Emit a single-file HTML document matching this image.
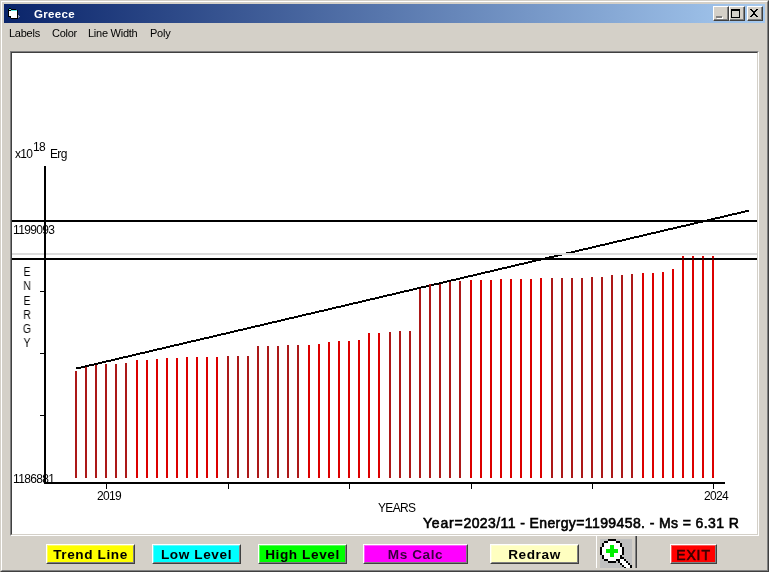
<!DOCTYPE html>
<html><head><meta charset="utf-8"><title>Greece</title>
<style>
html,body{margin:0;padding:0}
body{width:769px;height:572px;overflow:hidden;background:#d4d0c8;position:relative;font-family:"Liberation Sans",sans-serif;color:#000}
.a{position:absolute}
.t8,.menu,.ttext,.status,.btn{will-change:transform}
.win{left:0;top:0;width:769px;height:572px;box-sizing:border-box;background:#d4d0c8;
 border-top:1px solid #d4d0c8;border-left:1px solid #d4d0c8;border-right:1px solid #404040;border-bottom:1px solid #404040}
.win2{left:1px;top:1px;width:767px;height:570px;box-sizing:border-box;
 border-top:1px solid #fff;border-left:1px solid #fff;border-right:1px solid #808080;border-bottom:1px solid #808080}
.title{left:4px;top:4px;width:761px;height:19px;background:linear-gradient(to right,#0a246a 0%,#a6caf0 100%)}
.ttext{left:34px;top:7px;color:#fff;font-weight:bold;font-size:11.5px;line-height:14px;letter-spacing:0.35px;white-space:nowrap}
.cb{top:6px;width:16px;height:15px;box-sizing:border-box;background:#d4d0c8;border-top:1px solid #fff;border-left:1px solid #fff;border-right:1px solid #404040;border-bottom:1px solid #404040}
.cb i{position:absolute;left:0;top:0;width:13px;height:12px;border-right:1px solid #808080;border-bottom:1px solid #808080;display:block}
.menu{top:26px;font-size:11px;line-height:14px;white-space:nowrap;letter-spacing:-0.25px}
.panel{left:10px;top:51px;width:749px;height:485px;box-sizing:border-box;background:#fff;
 border-top:1px solid #808080;border-left:1px solid #808080;border-right:1px solid #fff;border-bottom:1px solid #fff}
.panel2{left:11px;top:52px;width:747px;height:483px;box-sizing:border-box;
 border-top:1px solid #404040;border-left:1px solid #404040;border-right:1px solid #d4d0c8;border-bottom:1px solid #d4d0c8}
.t8{font-size:12px;line-height:12px;letter-spacing:-0.65px;white-space:nowrap}
.btn{top:544px;height:20px;box-sizing:border-box;border-top:1px solid #fff;border-left:1px solid #fff;border-right:1px solid #404040;border-bottom:1px solid #404040;
 font-weight:bold;font-size:13.6px;line-height:16px;text-align:center;white-space:nowrap;letter-spacing:0.6px}
.btn b{display:block;padding-top:0.5px;box-sizing:border-box;width:100%;height:18px;border-right:1px solid #808080;border-bottom:1px solid #808080;border-top:1px solid rgba(255,255,255,.35);border-left:1px solid rgba(255,255,255,.35);font-weight:bold}
.status{left:423px;top:515px;font-size:14px;line-height:16px;white-space:nowrap;letter-spacing:0.4px;-webkit-text-stroke:0.6px #000}
</style></head><body>
<div class="a win"></div><div class="a win2"></div>
<div class="a title"></div>
<svg class="a" style="left:8px;top:8px" width="13" height="11" viewBox="0 0 13 11" shape-rendering="crispEdges">
<rect x="1" y="0" width="2" height="1" fill="#000"/><rect x="3" y="1" width="5" height="1" fill="#000"/>
<rect x="0" y="1" width="1" height="8" fill="#000"/><rect x="9" y="2" width="1" height="9" fill="#000"/>
<rect x="0" y="8" width="3" height="1" fill="#000"/><rect x="3" y="10" width="7" height="1" fill="#000"/><rect x="2" y="9" width="1" height="1" fill="#000"/>
<rect x="1" y="1" width="2" height="1" fill="#60e8e0"/><rect x="3" y="2" width="6" height="1" fill="#60e8e0"/>
<rect x="1" y="2" width="2" height="1" fill="#000"/><rect x="1" y="3" width="2" height="5" fill="#fff"/><rect x="3" y="3" width="6" height="7" fill="#fff"/>
<rect x="10" y="7" width="1" height="3" fill="#8a93ad"/><rect x="11" y="8" width="1" height="1" fill="#8a93ad"/>
</svg>
<div class="a ttext">Greece</div>
<div class="a cb" style="left:713px"><i></i><span class="a" style="left:3px;top:10px;width:6px;height:2px;background:#fff"></span><span class="a" style="left:2px;top:9px;width:6px;height:2px;background:#808080"></span></div>
<div class="a cb" style="left:729px"><i></i><span class="a" style="left:1px;top:2px;width:9px;height:9px;box-sizing:border-box;border:1px solid #000;border-top-width:2px"></span></div>
<div class="a cb" style="left:747px"><i></i><svg class="a" style="left:2px;top:2px" width="8" height="8" viewBox="0 0 8 8" shape-rendering="crispEdges"><path d="M0 0h2v1h-2zM6 0h2v1h-2zM1 1h2v1h-2zM5 1h2v1h-2zM2 2h4v1h-4zM3 3h2v2h-2zM2 5h4v1h-4zM1 6h2v1h-2zM5 6h2v1h-2zM0 7h2v1h-2zM6 7h2v1h-2z" fill="#000"/></svg></div>
<div class="a menu" style="left:9px">Labels</div>
<div class="a menu" style="left:52px">Color</div>
<div class="a menu" style="left:88px">Line Width</div>
<div class="a menu" style="left:150px">Poly</div>

<div class="a panel"></div><div class="a panel2"></div>
<svg class="a" style="left:12px;top:53px" width="745" height="481" viewBox="0 0 745 481" shape-rendering="crispEdges">
<path d="M64 314h5v2h-5zM69 313h4v2h-4zM73 312h4v2h-4zM77 311h5v2h-5zM82 310h4v2h-4zM86 309h4v2h-4zM90 308h4v2h-4zM94 307h5v2h-5zM99 306h4v2h-4zM103 305h4v2h-4zM107 304h4v2h-4zM111 303h5v2h-5zM116 302h4v2h-4zM120 301h4v2h-4zM124 300h4v2h-4zM128 299h5v2h-5zM133 298h4v2h-4zM137 297h4v2h-4zM141 296h4v2h-4zM145 295h5v2h-5zM150 294h4v2h-4zM154 293h4v2h-4zM158 292h4v2h-4zM162 291h5v2h-5zM167 290h4v2h-4zM171 289h4v2h-4zM175 288h4v2h-4zM179 287h5v2h-5zM184 286h4v2h-4zM188 285h4v2h-4zM192 284h5v2h-5zM197 283h4v2h-4zM201 282h4v2h-4zM205 281h4v2h-4zM209 280h5v2h-5zM214 279h4v2h-4zM218 278h4v2h-4zM222 277h4v2h-4zM226 276h5v2h-5zM231 275h4v2h-4zM235 274h4v2h-4zM239 273h4v2h-4zM243 272h5v2h-5zM248 271h4v2h-4zM252 270h4v2h-4zM256 269h4v2h-4zM260 268h5v2h-5zM265 267h4v2h-4zM269 266h4v2h-4zM273 265h4v2h-4zM277 264h5v2h-5zM282 263h4v2h-4zM286 262h4v2h-4zM290 261h4v2h-4zM294 260h5v2h-5zM299 259h4v2h-4zM303 258h4v2h-4zM307 257h5v2h-5zM312 256h4v2h-4zM316 255h4v2h-4zM320 254h4v2h-4zM324 253h5v2h-5zM329 252h4v2h-4zM333 251h4v2h-4zM337 250h4v2h-4zM341 249h5v2h-5zM346 248h4v2h-4zM350 247h4v2h-4zM354 246h4v2h-4zM358 245h5v2h-5zM363 244h4v2h-4zM367 243h4v2h-4zM371 242h4v2h-4zM375 241h5v2h-5zM380 240h4v2h-4zM384 239h4v2h-4zM388 238h4v2h-4zM392 237h5v2h-5zM397 236h4v2h-4zM401 235h4v2h-4zM405 234h4v2h-4zM409 233h5v2h-5zM414 232h4v2h-4zM418 231h4v2h-4zM422 230h5v2h-5zM427 229h4v2h-4zM431 228h4v2h-4zM435 227h4v2h-4zM439 226h5v2h-5zM444 225h4v2h-4zM448 224h4v2h-4zM452 223h4v2h-4zM456 222h5v2h-5zM461 221h4v2h-4zM465 220h4v2h-4zM469 219h4v2h-4zM473 218h5v2h-5zM478 217h4v2h-4zM482 216h4v2h-4zM486 215h4v2h-4zM490 214h5v2h-5zM495 213h4v2h-4zM499 212h4v2h-4zM503 211h4v2h-4zM507 210h5v2h-5zM512 209h4v2h-4zM516 208h4v2h-4zM520 207h4v2h-4zM524 206h5v2h-5zM529 205h4v2h-4zM533 204h4v2h-4zM537 203h5v2h-5zM542 202h4v2h-4zM546 201h4v2h-4zM550 200h4v2h-4zM554 199h5v2h-5zM559 198h4v2h-4zM563 197h4v2h-4zM567 196h4v2h-4zM571 195h5v2h-5zM576 194h4v2h-4zM580 193h4v2h-4zM584 192h4v2h-4zM588 191h5v2h-5zM593 190h4v2h-4zM597 189h4v2h-4zM601 188h4v2h-4zM605 187h5v2h-5zM610 186h4v2h-4zM614 185h4v2h-4zM618 184h4v2h-4zM622 183h5v2h-5zM627 182h4v2h-4zM631 181h4v2h-4zM635 180h4v2h-4zM639 179h5v2h-5zM644 178h4v2h-4zM648 177h4v2h-4zM652 176h4v2h-4zM656 175h5v2h-5zM661 174h4v2h-4zM665 173h4v2h-4zM669 172h5v2h-5zM674 171h4v2h-4zM678 170h4v2h-4zM682 169h4v2h-4zM686 168h5v2h-5zM691 167h4v2h-4zM695 166h4v2h-4zM699 165h4v2h-4zM703 164h5v2h-5zM708 163h4v2h-4zM712 162h4v2h-4zM716 161h4v2h-4zM720 160h5v2h-5zM725 159h4v2h-4zM729 158h4v2h-4zM733 157h4v2h-4z" fill="#000"/>
<rect x="0" y="167" width="745" height="2" fill="#000"/>
<rect x="0" y="205" width="745" height="2" fill="#000"/>
<rect x="0" y="200" width="745" height="2" fill="#dcdcdc"/>
<rect x="63" y="318" width="2" height="107" fill="#ac1818"/>
<rect x="73" y="314" width="2" height="111" fill="#ac1818"/>
<rect x="83" y="312" width="2" height="113" fill="#ac1818"/>
<rect x="93" y="311" width="2" height="114" fill="#ac1818"/>
<rect x="103" y="311" width="2" height="114" fill="#ac1818"/>
<rect x="113" y="310" width="2" height="115" fill="#ac1818"/>
<rect x="124" y="307" width="2" height="118" fill="#dc0000"/>
<rect x="134" y="307" width="2" height="118" fill="#dc0000"/>
<rect x="144" y="306" width="2" height="119" fill="#dc0000"/>
<rect x="154" y="305" width="2" height="120" fill="#dc0000"/>
<rect x="164" y="305" width="2" height="120" fill="#dc0000"/>
<rect x="174" y="304" width="2" height="121" fill="#dc0000"/>
<rect x="184" y="304" width="2" height="121" fill="#dc0000"/>
<rect x="194" y="304" width="2" height="121" fill="#dc0000"/>
<rect x="204" y="304" width="2" height="121" fill="#dc0000"/>
<rect x="215" y="303" width="2" height="122" fill="#ac1818"/>
<rect x="225" y="303" width="2" height="122" fill="#ac1818"/>
<rect x="235" y="303" width="2" height="122" fill="#ac1818"/>
<rect x="245" y="293" width="2" height="132" fill="#ac1818"/>
<rect x="255" y="293" width="2" height="132" fill="#ac1818"/>
<rect x="265" y="293" width="2" height="132" fill="#ac1818"/>
<rect x="275" y="292" width="2" height="133" fill="#ac1818"/>
<rect x="285" y="292" width="2" height="133" fill="#ac1818"/>
<rect x="296" y="292" width="2" height="133" fill="#dc0000"/>
<rect x="306" y="291" width="2" height="134" fill="#dc0000"/>
<rect x="316" y="289" width="2" height="136" fill="#dc0000"/>
<rect x="326" y="288" width="2" height="137" fill="#dc0000"/>
<rect x="336" y="288" width="2" height="137" fill="#dc0000"/>
<rect x="346" y="287" width="2" height="138" fill="#dc0000"/>
<rect x="356" y="280" width="2" height="145" fill="#dc0000"/>
<rect x="366" y="280" width="2" height="145" fill="#dc0000"/>
<rect x="377" y="279" width="2" height="146" fill="#ac1818"/>
<rect x="387" y="278" width="2" height="147" fill="#ac1818"/>
<rect x="397" y="278" width="2" height="147" fill="#ac1818"/>
<rect x="407" y="236" width="2" height="189" fill="#ac1818"/>
<rect x="417" y="231" width="2" height="194" fill="#ac1818"/>
<rect x="427" y="231" width="2" height="194" fill="#ac1818"/>
<rect x="437" y="229" width="2" height="196" fill="#ac1818"/>
<rect x="447" y="228" width="2" height="197" fill="#ac1818"/>
<rect x="458" y="227" width="2" height="198" fill="#dc0000"/>
<rect x="468" y="227" width="2" height="198" fill="#dc0000"/>
<rect x="478" y="227" width="2" height="198" fill="#dc0000"/>
<rect x="488" y="226" width="2" height="199" fill="#dc0000"/>
<rect x="498" y="226" width="2" height="199" fill="#dc0000"/>
<rect x="508" y="226" width="2" height="199" fill="#dc0000"/>
<rect x="518" y="226" width="2" height="199" fill="#dc0000"/>
<rect x="528" y="225" width="2" height="200" fill="#dc0000"/>
<rect x="539" y="225" width="2" height="200" fill="#ac1818"/>
<rect x="549" y="225" width="2" height="200" fill="#ac1818"/>
<rect x="559" y="225" width="2" height="200" fill="#ac1818"/>
<rect x="569" y="225" width="2" height="200" fill="#ac1818"/>
<rect x="579" y="224" width="2" height="201" fill="#ac1818"/>
<rect x="589" y="224" width="2" height="201" fill="#ac1818"/>
<rect x="599" y="222" width="2" height="203" fill="#ac1818"/>
<rect x="609" y="222" width="2" height="203" fill="#ac1818"/>
<rect x="619" y="221" width="2" height="204" fill="#ac1818"/>
<rect x="630" y="220" width="2" height="205" fill="#dc0000"/>
<rect x="640" y="220" width="2" height="205" fill="#dc0000"/>
<rect x="650" y="219" width="2" height="206" fill="#dc0000"/>
<rect x="660" y="216" width="2" height="209" fill="#dc0000"/>
<rect x="670" y="203" width="2" height="222" fill="#dc0000"/>
<rect x="680" y="203" width="2" height="222" fill="#dc0000"/>
<rect x="690" y="203" width="2" height="222" fill="#dc0000"/>
<rect x="700" y="203" width="2" height="222" fill="#dc0000"/>
<rect x="0" y="205" width="745" height="2" fill="#000" fill-opacity="0.7"/>
<rect x="32" y="113" width="2" height="318" fill="#000"/>
<rect x="32" y="429" width="681" height="2" fill="#000"/>
<rect x="94" y="431" width="1" height="5" fill="#000"/><rect x="216" y="431" width="1" height="5" fill="#000"/><rect x="337" y="431" width="1" height="5" fill="#000"/><rect x="459" y="431" width="1" height="5" fill="#000"/><rect x="580" y="431" width="1" height="5" fill="#000"/><rect x="701" y="431" width="1" height="5" fill="#000"/><rect x="28" y="238" width="4" height="1" fill="#000"/><rect x="28" y="300" width="4" height="1" fill="#000"/><rect x="28" y="362" width="4" height="1" fill="#000"/>
</svg>
<div class="a t8" style="left:14.5px;top:148px">x10</div>
<div class="a t8" style="left:32.5px;top:141px">18</div>
<div class="a t8" style="left:50px;top:148px">Erg</div>
<div class="a t8" style="left:13px;top:224px">1199093</div>
<div class="a t8" style="left:13px;top:473px">1186881</div>
<div class="a t8" style="left:22px;top:265px;letter-spacing:0;width:10px;text-align:center;line-height:14.3px;transform:scaleX(0.86)">E<br>N<br>E<br>R<br>G<br>Y</div>
<div class="a t8" style="left:97px;top:490px">2019</div>
<div class="a t8" style="left:704px;top:490px">2024</div>
<div class="a t8" style="left:378px;top:502px">YEARS</div>
<div class="a status"><span style="letter-spacing:0.8px">Year=</span>2023/11 - Energy=1199458. - Ms = 6.31 R</div>

<div class="a btn" style="left:46px;width:89px;background:#ffff00"><b>Trend Line</b></div>
<div class="a btn" style="left:152px;width:89px;background:#00ffff"><b>Low Level</b></div>
<div class="a btn" style="left:258px;width:89px;background:#00ff00"><b>High Level</b></div>
<div class="a btn" style="left:363px;width:105px;background:#ff00ff;color:#38003c"><b>Ms Calc</b></div>
<div class="a btn" style="left:490px;width:89px;background:#ffffc0"><b>Redraw</b></div>
<div class="a" style="left:596px;top:536px;width:41px;height:32px;box-sizing:border-box;border-left:1px solid #fff;border-right:1px solid #404040;overflow:hidden">
<div class="a" style="left:38px;top:0;width:1px;height:34px;background:#808080"></div>
<svg class="a" style="left:3px;top:3px" width="32" height="29" viewBox="0 0 16 14.5" shape-rendering="crispEdges">
<rect width="16" height="15" fill="#c0c0c0"/>
<path d="M4 1h4v1h2v2h1v4h-1v2h-2v1h-4v-1h-2v-2h-1v-4h1v-2h2z" fill="#fff"/>
<path d="M4 0h4v1h-4zM2 1h2v1h-2zM8 1h2v1h-2zM1 2h1v2h-1zM10 2h1v2h-1zM0 4h1v4h-1zM11 4h1v4h-1zM1 8h1v2h-1zM10 8h1v2h-1zM2 10h2v1h-2zM8 10h2v1h-2zM4 11h4v1h-4z" fill="#000"/>
<path d="M5 3h2v2h2v2h-2v2h-2v-2h-2v-2h2z" fill="#00f000"/>
<path d="M10 10h2v1h-2zM10 11h3v1h-3zM11 12h3v1h-3zM12 13h3v1h-3zM13 14h2v1h-2z" fill="#fff"/>
<path d="M11 9h1v1h-1zM12 10h1v1h-1zM13 11h1v1h-1zM14 12h1v1h-1zM15 13h1v2h-1zM9 11h1v1h-1zM10 12h1v1h-1zM11 13h1v1h-1zM12 14h1v1h-1z" fill="#000"/>
</svg></div>
<div class="a btn" style="left:670px;width:47px;background:#ff0000;color:#380000;font-weight:normal;font-size:14px;letter-spacing:0.9px"><b style="font-weight:normal;-webkit-text-stroke:0.6px #380000">EXIT</b></div>
</body></html>
